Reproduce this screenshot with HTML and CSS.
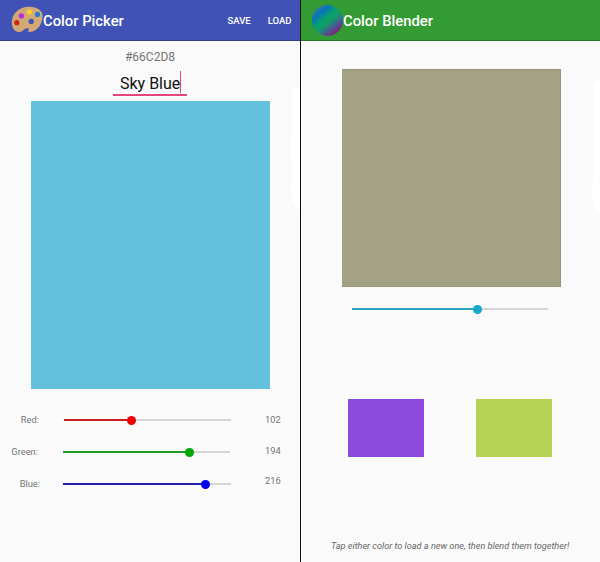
FILE: index.html
```html
<!DOCTYPE html>
<html lang="en">
<head>
<meta charset="utf-8">
<title>Color Picker and Blender</title>
<link rel="stylesheet" href="styles.css">
</head>
<body>
<main class="screens">
  <section class="screen picker">
    <header class="bar">
      <svg class="logo" width="32" height="28" viewBox="0 0 32 28">
        <path fill="#d2a875" d="M19 .8C9 .2 1.300 7.200.8 15.500.4 21.300 3.500 26 8.200 26.100c3.500 0 4.300-3 7-3.600 2.400-.5 3.200.5 2.400 1.600-.9 1.200-.3 1.900 1.200 1.800C26.500 25.700 31.700 17.500 31.600 10 31.500 4 25.500 1 19 .8ZM20.200 12.700a2.700 2.700 0 1 1 0 5.400 2.700 2.700 0 0 1 0-5.400Z" fill-rule="evenodd"/>
        <circle cx="5.800" cy="16.700" r="2.600" fill="#d0201a"/>
        <circle cx="10.400" cy="9.900" r="2.600" fill="#bd2bd6"/>
        <circle cx="18.500" cy="6" r="2.600" fill="#ffd22e"/>
        <circle cx="26.500" cy="8.400" r="2.600" fill="#257dd2"/>
      </svg>
      <h1 class="title">Color Picker</h1>
      <nav class="actions"><span>SAVE</span><span>LOAD</span></nav>
    </header>
    <div class="hex">#66C2D8</div>
    <div class="name"><span class="name-text">Sky Blue</span></div>
    <div class="swatch"></div>
    <div class="sliders">
      <div class="row red"><span class="label">Red:</span><div class="track"><i class="fill"></i><b class="thumb"></b></div><span class="value">102</span></div>
      <div class="row green"><span class="label">Green:</span><div class="track"><i class="fill"></i><b class="thumb"></b></div><span class="value">194</span></div>
      <div class="row blue"><span class="label">Blue:</span><div class="track"><i class="fill"></i><b class="thumb"></b></div><span class="value">216</span></div>
    </div>
    <svg class="edge" width="9" height="124" viewBox="0 0 9 124"><path fill="#fff" d="M2 1H9V122L5 121 1 114 0 96 2 94 0 68 1 10Z"/></svg>
  </section>
  <section class="screen blender">
    <header class="bar">
      <svg class="logo" width="32" height="32" viewBox="0 0 32 32">
        <defs><linearGradient id="orb" x1=".15" y1=".1" x2=".82" y2=".93">
          <stop offset="0" stop-color="#397ca6"/><stop offset=".18" stop-color="#0874b8"/><stop offset=".43" stop-color="#08a36a"/><stop offset=".57" stop-color="#129b69"/><stop offset=".78" stop-color="#4c5695"/><stop offset="1" stop-color="#8b1670"/>
        </linearGradient></defs>
        <circle cx="16.400" cy="16.400" r="15.500" fill="url(#orb)"/>
      </svg>
      <h1 class="title">Color Blender</h1>
    </header>
    <div class="swatch"></div>
    <div class="track mix"><i class="fill"></i><b class="thumb"></b></div>
    <div class="sources"><div class="source violet"></div><div class="source lime"></div></div>
    <p class="hint">Tap either color to load a new one, then blend them together!</p>
    <svg class="edge" width="8" height="132" viewBox="0 0 8 132"><path fill="#fff" d="M2 1 8 0V131L3 130 0 114 2 68 1 45Z"/></svg>
  </section>
</main>
</body>
</html>
```
FILE: styles.css
```css
* { box-sizing: border-box; }
body { margin: 0; font-family: Roboto, sans-serif; color: #747474; }
.screens { display: grid; grid-template-columns: 300px 299px; column-gap: 1px; width: 600px; height: 562px; background: #111; overflow: hidden; }
.screen { position: relative; display: flex; flex-direction: column; background: #fafafa; overflow: hidden; }
.bar { display: flex; flex: none; align-items: center; height: 41px; padding-left: 11px; color: #fff; }
.picker .bar { background: #4052b5; border-bottom: 1px solid #303e8c; }
.blender .bar { background: #339b33; border-bottom: 1px solid #267626; padding-left: 10px; }
.logo { flex: none; }
.picker .logo { margin-top: -1px; }
.title { margin: 2px 0 0; font-size: 14.8px; font-weight: 500; line-height: 20px; white-space: nowrap; }
.actions { display: flex; gap: 17px; margin-left: auto; padding-right: 8.5px; font-size: 9.5px; font-weight: 500; }
.hex { height: 16px; margin-top: 8px; font-size: 12px; line-height: 16px; text-align: center; }
.name { width: 74px; height: 31px; margin: 0 0 0 113px; padding: 6px 0 0 7px; border-bottom: 2px solid #e64580; font-size: 16px; line-height: 25px; color: #111; white-space: nowrap; }
.name-text { display: block; width: 61px; height: 22px; border-right: 1px solid #e6457f; }
.picker .swatch { width: 239px; height: 288px; margin: 5px 0 0 30.5px; background: #64c1de; }
.sliders { padding-top: 15px; }
.row { display: grid; grid-template-columns: 40px 167px 1fr; column-gap: 24px; align-items: center; height: 32px; font-size: 9.3px; line-height: 12px; }
.label { text-align: right; }
.value { padding-left: 10px; }
.track { display: flex; align-items: center; height: 12px; background: linear-gradient(#d5d5d5, #d5d5d5) center / 100% 2px no-repeat; }
.fill { height: 2px; background: currentColor; }
.thumb { flex: none; width: 9px; height: 9px; margin-left: -4.5px; border-radius: 50%; background: currentColor; }
.red .track { color: #f00000; }
.red .fill { width: 67px; background: #c82020; }
.red .label { padding-right: 1px; }
.green { grid-template-columns: 38px 167px 1fr; column-gap: 25px; }
.green .track { color: #00a800; }
.green .fill { width: 126.5px; background: #269b26; }
.green .value { margin-top: -3px; }
.blue { grid-template-columns: 40px 168px 1fr; column-gap: 23px; }
.blue .track { color: #0000f0; }
.blue .fill { width: 142.5px; background: #2020a5; }
.blue .value { padding-left: 11px; margin-top: -6px; }
.blender .swatch { width: 219px; height: 218px; margin: 28px 0 0 41px; background: #a3a284; border: 1px solid #97967a; border-width: 1px 1px 1px 0; }
.mix { width: 196px; margin: 16px 0 0 51px; color: #14a8cc; }
.mix .fill { width: 125.5px; background: #2ba6bd; }
.sources { display: flex; gap: 52px; margin: 84px 0 0 47px; }
.source { width: 76px; height: 58px; }
.violet { background: #8c4bdc; }
.lime { background: #b5d254; }
.hint { margin: 83px 0 0 30px; font-size: 9.15px; font-style: italic; line-height: 12px; white-space: nowrap; color: #666; }
.edge { position: absolute; right: 0; top: 87px; }
.blender .edge { right: 0; top: 81px; }
```
